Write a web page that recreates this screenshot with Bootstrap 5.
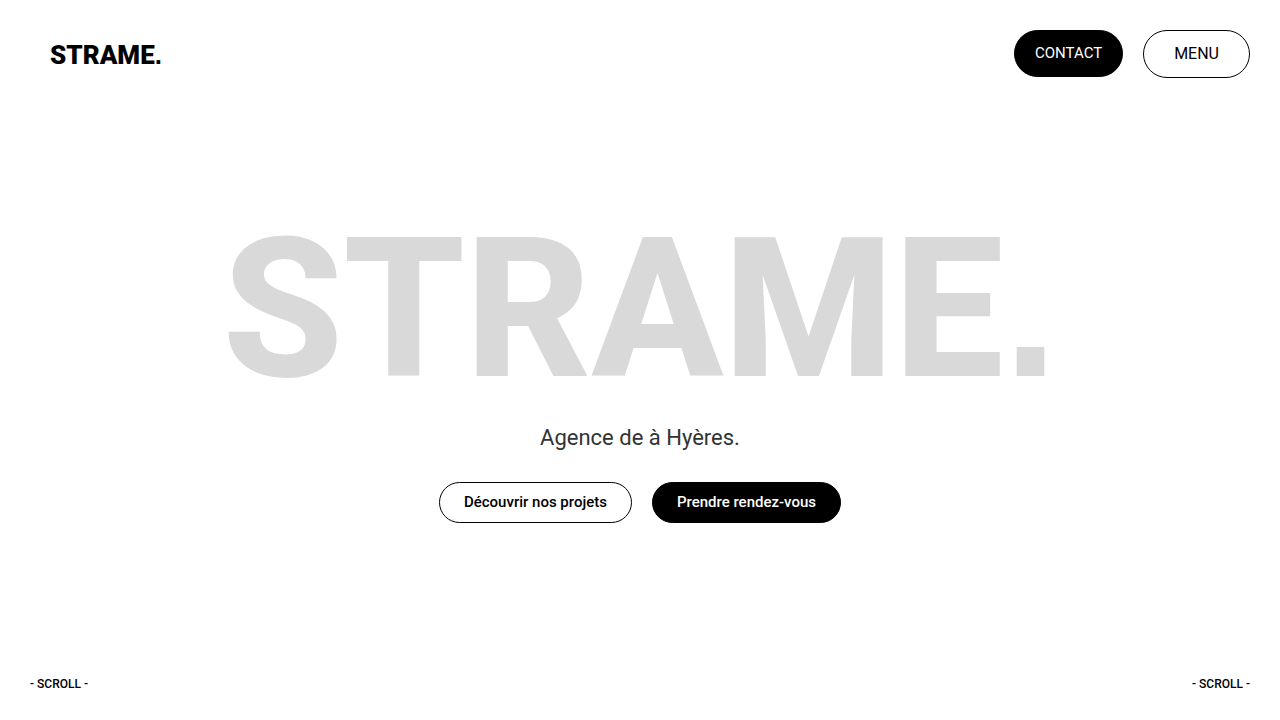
<!DOCTYPE html>
<html lang="fr">
<head>
<meta charset="utf-8">
<meta name="viewport" content="width=device-width, initial-scale=1">
<title>STRAME.</title>
<link href="https://cdn.jsdelivr.net/npm/bootstrap@5.3.0/dist/css/bootstrap.min.css" rel="stylesheet">
<style>
  body { font-family: Roboto, "Liberation Sans", sans-serif; color: #000; background: #fff; }
  .site-header { padding: 30px 30px 0; }
  .brand { font-size: 26px; line-height: 30px; font-weight: 900; margin: 10px 0 0 20px; }
  .stop { font-family: "Liberation Sans", sans-serif; font-weight: 700; }
  .pill { --bs-btn-border-radius: 50px; --bs-btn-color: #000; --bs-btn-border-color: #000;
          --bs-btn-hover-bg: #000; --bs-btn-hover-color: #fff; --bs-btn-hover-border-color: #000; }
  .pill-dark { --bs-btn-bg: #000; --bs-btn-color: #fff; }
  .pill-contact { font-size: 15px; line-height: 23px; padding: 11px 20px; }
  .pill-menu { font-size: 16px; line-height: 24px; padding: 11px 30px; }
  .pill-cta { font-size: 15px; line-height: 23px; padding: 8px 24px; font-weight: 500; }
  .nav-gap { gap: 20px; }
  .hero { padding-bottom: 22px; }
  .wordmark { font-size: 195px; line-height: 200px; font-weight: 800; color: #d9d9d9; margin: 0; }
  .tagline { font-size: 22px; line-height: 32px; color: #333; margin: 12px 0 28px; }
  .site-footer { padding: 0 30px 26px; font-size: 12px; line-height: 20px; font-weight: 500; }
</style>
</head>
<body class="min-vh-100 d-flex flex-column">
<header class="site-header d-flex justify-content-between align-items-start">
  <a class="brand text-black text-decoration-none" href="#">STRAME<span class="stop">.</span></a>
  <nav class="nav-gap d-flex align-items-start" aria-label="Navigation principale">
    <a class="btn pill pill-dark pill-contact" href="#contact">CONTACT</a>
    <button class="btn pill pill-menu" type="button">MENU</button>
  </nav>
</header>
<main class="hero flex-grow-1 d-flex flex-column align-items-center justify-content-center text-center">
  <h1 class="wordmark">STRAME<span class="stop">.</span></h1>
  <p class="tagline">Agence de à Hyères.</p>
  <div class="nav-gap d-flex flex-wrap justify-content-center">
    <a class="btn pill pill-cta" href="#projets">Découvrir nos projets</a>
    <a class="btn pill pill-dark pill-cta" href="#rendez-vous">Prendre rendez-vous</a>
  </div>
</main>
<footer class="site-footer d-flex justify-content-between">
  <span>- SCROLL -</span>
  <span>- SCROLL -</span>
</footer>
<script src="https://cdn.jsdelivr.net/npm/bootstrap@5.3.0/dist/js/bootstrap.bundle.min.js"></script>
</body>
</html>
